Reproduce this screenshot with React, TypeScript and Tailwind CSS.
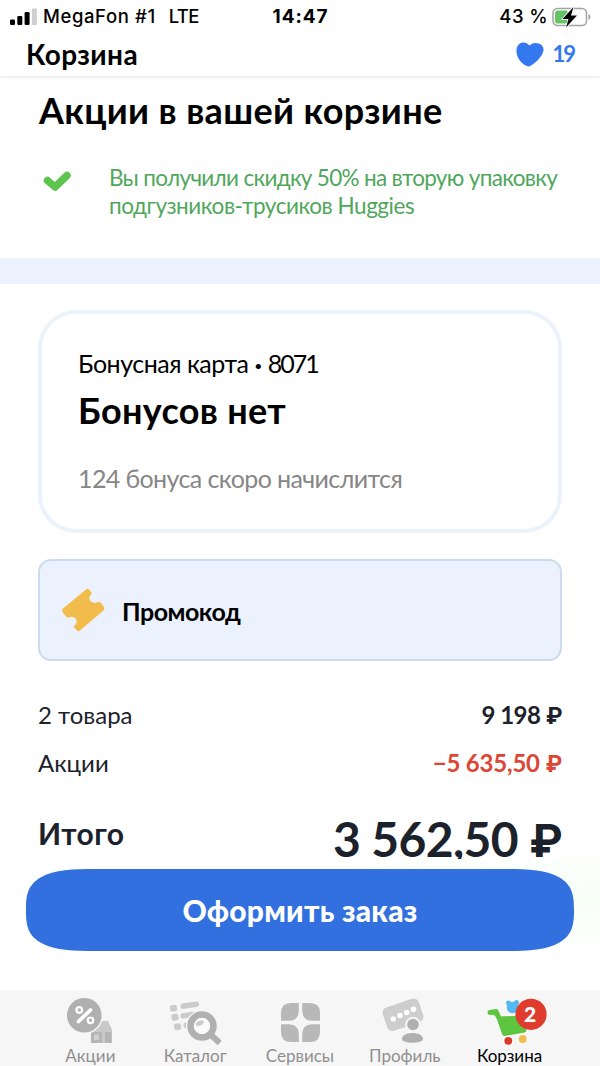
import React from "react";

type Tab = {
  label: string;
  icon: React.ReactNode;
  active?: boolean;
};

type RowProps = {
  label: string;
  value: string;
  valueClass: string;
};

const tabs: Tab[] = [
  {
    label: "Акции",
    icon: (
      <>
        <path d="M41 35 L47 27 H58 L62 36 V49 H41 Z" fill="#c9c9c9" />
        <path d="M41 38 H52 V49 H41 Z M55 38 H61.5 V49 H55 Z" fill="#b5b5b5" />
        <path d="M44 40.500 H49 V46 H44 Z" fill="#cfcfcf" />
        <circle cx="34.300" cy="21.300" r="18.800" fill="#f6f6f6" />
        <circle cx="34.300" cy="21.300" r="17.300" fill="#b0b0b0" />
        <path d="M28.500 27.500 L40.500 16" stroke="#fff" strokeWidth="3.800" strokeLinecap="round" />
        <circle cx="29.300" cy="16" r="2.800" fill="none" stroke="#fff" strokeWidth="2.200" />
        <circle cx="40.500" cy="26.300" r="2.800" fill="none" stroke="#fff" strokeWidth="2.200" />
      </>
    ),
  },
  {
    label: "Каталог",
    icon: (
      <>
        <g fill="#cbcbcb">
          <rect x="15" y="11" width="7" height="6.500" rx="2" transform="rotate(-8 18 14)" />
          <rect x="25.500" y="8.500" width="18.500" height="5.500" rx="2" transform="rotate(-8 34 11)" />
          <rect x="16.500" y="20" width="7" height="6.500" rx="2" transform="rotate(-8 20 23)" />
          <rect x="25.500" y="18.500" width="14" height="5.500" rx="2" transform="rotate(-8 32 21)" />
          <rect x="19" y="29.500" width="7" height="6.500" rx="2" transform="rotate(-8 22 32)" />
          <rect x="28.500" y="28.500" width="8" height="5.500" rx="2" />
        </g>
        <circle cx="47" cy="32" r="16" fill="#f6f6f6" />
        <path d="M55 40 L62.500 47" stroke="#b0b0b0" strokeWidth="6" strokeLinecap="square" />
        <circle cx="47" cy="32" r="11.500" fill="#fbfbfb" stroke="#b0b0b0" strokeWidth="6.500" />
        <path d="M40.500 29 Q45 25 49 27 Q49 32 41.500 32 Z" fill="#cbcbcb" />
      </>
    ),
  },
  {
    label: "Сервисы",
    icon: (
      <g fill="#b8b8b8">
        <path d="M38.800 9 V17 Q38.500 26.500 29 26.800 H21 V19 Q21 9 31 9 Z" />
        <path d="M42.200 9 V17 Q42.500 26.500 52 26.800 H60 V19 Q60 9 50 9 Z" />
        <path d="M38.800 48 V40 Q38.500 30.500 29 30.200 H21 V38 Q21 48 31 48 Z" />
        <path d="M42.200 48 V40 Q42.500 30.500 52 30.200 H60 V38 Q60 48 50 48 Z" />
      </g>
    ),
  },
  {
    label: "Профиль",
    icon: (
      <>
        <rect x="19" y="8.500" width="38" height="24.500" rx="5.500" transform="rotate(-19 38 20.700)" fill="#cdcdcd" />
        <g fill="#fff">
          <circle cx="28.300" cy="25" r="2.800" />
          <circle cx="35" cy="21.500" r="2.800" />
          <circle cx="41.700" cy="18.500" r="2.800" />
          <circle cx="48.500" cy="15.300" r="2.800" />
        </g>
        <circle cx="48" cy="30.500" r="7.800" fill="#f6f6f6" />
        <circle cx="48" cy="30.500" r="5.800" fill="#b0b0b0" />
        <path d="M37 45 C37 37 58 37 58 45 C58 50 37 50 37 45 Z" fill="#b0b0b0" />
      </>
    ),
  },
  {
    label: "Корзина",
    active: true,
    icon: (
      <>
        <g fill="#55b8f2">
          <circle cx="38.500" cy="9" r="2.500" />
          <circle cx="46.500" cy="8.500" r="2.500" />
          <circle cx="42.500" cy="13.500" r="5.800" />
        </g>
        <path
          d="M20 18.500 L26 17.500 L29.500 25 L54 24 L54 36 L34.500 39.500 L29.500 25"
          fill="#5dc540"
          stroke="#5dc540"
          strokeWidth="5"
          strokeLinejoin="round"
          strokeLinecap="round"
        />
        <circle cx="38.300" cy="46.800" r="3.900" fill="#d93a2b" />
        <circle cx="52.700" cy="45" r="3.900" fill="#f3bd4e" />
        <circle cx="61" cy="20.300" r="15.600" fill="#e03c2d" />
      </>
    ),
  },
];

function StatusBar() {
  return (
    <div className="grid h-[33px] grid-cols-3 items-center pr-[9px] pl-[10px] font-['Inter',sans-serif] text-[18.5px] leading-[33px] font-medium">
      <div className="flex items-center">
        <svg className="h-[18px] w-[27px] shrink-0" viewBox="0 0 27 18">
          <rect x="0" y="11.500" width="5" height="5.500" rx="1.200" />
          <rect x="7.300" y="8" width="5" height="9" rx="1.200" />
          <rect x="14.600" y="4" width="5" height="13" rx="1.200" />
          <rect x="21.900" y="0.500" width="5" height="16.500" rx="1.200" fill="#cfcfcf" />
        </svg>
        <span className="ml-[6px] tracking-[0.6px] whitespace-nowrap">MegaFon #1</span>
        <span className="ml-[13px] tracking-[-0.6px]">LTE</span>
      </div>
      <div className="text-center text-[19px] font-bold tracking-[0.9px]">14:47</div>
      <div className="flex items-center justify-end">
        <span className="mr-[4px] tracking-[0.4px] whitespace-nowrap">43 %</span>
        <svg className="h-[22px] w-[39px] shrink-0" viewBox="0 0 39 22">
          <rect x="1" y="2.500" width="33.500" height="17" rx="4.500" fill="#fff" stroke="#a3a3a3" strokeWidth="1.500" />
          <rect x="3" y="4.500" width="13" height="13" rx="2.500" fill="#67c466" />
          <path d="M36.500 8 Q38.500 8.500 38.500 11 Q38.500 13.500 36.500 14 Z" fill="#a3a3a3" />
          <path d="M21.500 1 L10.500 13 H16.500 L14 21.500 L25 9.500 H19 Z" stroke="#fff" strokeWidth="1.500" />
          <path d="M21.500 1 L10.500 13 H16.500 L14 21.500 L25 9.500 H19 Z" />
        </svg>
      </div>
    </div>
  );
}

function Header() {
  return (
    <header className="flex h-[44px] items-center justify-between border-b border-[#f0f0f0] pr-[27px] pb-[2px] pl-[26px] shadow-[0_1px_3px_rgba(0,0,0,0.06)]">
      <h1 className="text-[28px] leading-none font-bold tracking-[0.4px]">Корзина</h1>
      <div className="flex items-center gap-[8px] text-[#3478f0]">
        <svg className="h-[26px] w-[28px]" viewBox="0 0 28 26">
          <path
            d="M13.500 4.500 C9 -1 1 1 0.500 9 C0 17 6 23 11 25 Q13 26 15 24.500 C20 21.500 26 16 27.500 9.500 C28.500 3 19 -1 13.500 4.500 Z"
            fill="#3478f0"
          />
        </svg>
        <span className="mr-[-1px] text-[22px] leading-none font-bold tracking-[-2px]">19</span>
      </div>
    </header>
  );
}

function Ruble() {
  return <span className="font-['Inter',sans-serif] text-[0.94em]">₽</span>;
}

function Row({ label, value, valueClass }: RowProps) {
  return (
    <div className="flex h-[30px] justify-between text-[24px] leading-[30px]">
      <span>{label}</span>
      <span className={valueClass}>
        {value} <Ruble />
      </span>
    </div>
  );
}

export default function App() {
  return (
    <div className="flex h-[1066px] w-[600px] flex-col overflow-hidden bg-white font-['Lato',sans-serif] text-black">
      <StatusBar />
      <Header />

      <main className="h-[782px] overflow-hidden">
        <section className="h-[181px] pt-[11px] pl-[38px]">
          <h2 className="ml-px text-[36px] leading-[44px] font-bold tracking-[0.36px] whitespace-nowrap">
            Акции в вашей корзине
          </h2>
          <div className="mt-[31px] flex">
            <svg className="mt-[6px] ml-[5px] h-[24px] w-[30px] shrink-0" viewBox="0 0 30 24">
              <path
                d="M4.500 11.500 L12 18 L24 6.500"
                fill="none"
                stroke="#5dc44e"
                strokeWidth="7.500"
                strokeLinecap="round"
                strokeLinejoin="round"
              />
            </svg>
            <p className="mt-px ml-[36px] text-[22.5px] leading-[28px] whitespace-nowrap text-[#50a75c]">
              <span className="block tracking-[-0.68px]">Вы получили скидку 50% на вторую упаковку</span>
              <span className="block tracking-[-0.45px]">подгузников-трусиков Huggies</span>
            </p>
          </div>
        </section>

        <div className="h-[26px] bg-[#ebf2fd]" />

        <section className="mx-[38px] mt-[26px] h-[223px] rounded-[38px] border-4 border-[#ecf2fc] pt-[34px] pl-[36px] whitespace-nowrap">
          <p className="h-[30px] text-[25px] leading-[30px] tracking-[-0.5px]">
            Бонусная карта <span className="relative top-[-2px] text-[14px] leading-none">•</span>{" "}
            <span className="tracking-[-2px]">8071</span>
          </p>
          <p className="mt-[10px] text-[36px] leading-[44px] font-bold tracking-[0.3px]">Бонусов нет</p>
          <p className="mt-[31px] text-[25px] leading-[30px] tracking-[-0.6px] text-[#868686]">124 бонуса скоро начислится</p>
        </section>

        <section className="mx-[38px] mt-[26px] flex h-[102px] items-center rounded-[13px] border-2 border-[#c9dbee] bg-[#ebf2fd] pl-[21px]">
          <svg className="h-[44px] w-[45px]" viewBox="0 0 45 44">
            <path
              d="M25 1.500 Q27 0 28.500 2 L31 5.500 Q27 9 29 12.500 Q32 16.500 37 14 Q39 13.500 40 15 L43 19 Q44 21 42.500 22.500 L19 42.500 Q17 44 15.500 42 L12.500 38.500 Q17 35 15 31 Q12 27.500 7.500 29.500 Q6 30 5 28.500 L1.500 24 Q0.500 22 2 20.500 Z"
              fill="#f1bc4c"
            />
          </svg>
          <span className="mt-[2px] ml-[16px] text-[25px] leading-[30px] font-bold tracking-[-0.5px]">Промокод</span>
        </section>

        <section className="mx-[38px] mt-[39px] text-[#1b222b]">
          <Row label="2 товара" value="9 198" valueClass="font-bold tracking-[-0.5px]" />
          <div className="h-[18px]" />
          <Row label="Акции" value="−5 635,50" valueClass="font-bold tracking-[-0.2px] text-[#dc4633]" />
          <div className="mt-[30px] flex h-[60px] justify-between font-bold whitespace-nowrap">
            <span className="pt-[5px] text-[30px] leading-[40px] tracking-[0.4px]">Итого</span>
            <span className="text-[48px] leading-[62px] tracking-[-0.6px]">
              3 562,50 <Ruble />
            </span>
          </div>
        </section>
      </main>

      <div className="h-[131px] bg-[radial-gradient(ellipse_at_100%_30%,#f7fef6_0%,#fafffa_20%,#ffffff_45%)] px-[26px] pt-[10px]">
        <button className="block h-[82px] w-full rounded-[70px/41px] bg-[#3170de] text-[30px] leading-[80px] font-black tracking-[0.25px] text-white [corner-shape:superellipse(1.58)]">
          Оформить заказ
        </button>
      </div>

      <nav className="flex h-[76px] justify-center bg-[#f6f6f6] pt-[4px]">
        {tabs.map((tab) => (
          <div key={tab.label} className="relative flex w-[104.800px] flex-col items-center">
            <svg className="h-[52px] w-[80px] shrink-0" viewBox="0 0 80 52">
              {tab.icon}
            </svg>
            {tab.active && (
              <span className="absolute top-[7px] left-[63px] w-[20px] text-center text-[21px] leading-[25px] font-black text-white">
                2
              </span>
            )}
            <span className={tab.active ? "text-[17px] leading-[20px] text-black" : "text-[17px] leading-[20px] text-[#8f8f8f]"}>
              {tab.label}
            </span>
          </div>
        ))}
      </nav>
    </div>
  );
}
